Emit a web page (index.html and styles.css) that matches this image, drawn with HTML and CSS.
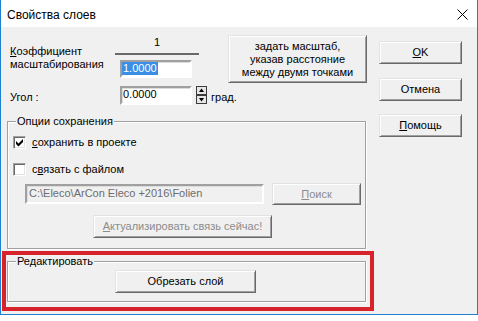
FILE: index.html
```html
<!DOCTYPE html>
<html>

<head>
  <meta charset="utf-8">
  <title>Свойства слоев</title>
  <meta name="viewport" content="width=device-width, initial-scale=1">

  <link rel="stylesheet" href="styles.css">

</head>

<body>
  <div class="window">
    <div class="titlebar">
      <span class="title">Свойства слоев</span>
      <svg class="close" width="11" height="11" viewBox="0 0 11 11">
        <path d="M0.5 0.5L10.5 10.5M10.5 0.5L0.5 10.5" stroke="#000" stroke-width="1" fill="none"/>
      </svg>
    </div>

    <div class="client">
      <div class="main">
        <div class="scale-row">
          <div class="scale-label"><u>К</u>оэффициент<br>масштабирования</div>
          <div class="ratio">
            <div class="ratio-num">1</div>
            <div class="ratio-bar"></div>
            <div class="field ratio-field"><span class="sel">1.0000</span></div>
          </div>
          <button class="btn btn-measure">задать масштаб,<br>указав расстояние<br>между двумя точками</button>
        </div>

        <div class="angle-row">
          <span class="angle-label">Угол :</span>
          <div class="field">0.0000</div>
          <svg class="spin" width="11" height="18" viewBox="0 0 11 18">
            <rect x="0.5" y="0.5" width="10" height="8" fill="#e6e6e6" stroke="#3c3c3c"/>
            <rect x="0.5" y="9.5" width="10" height="8" fill="#e6e6e6" stroke="#3c3c3c"/>
            <path d="M5.5 2.5L8 6H3z" fill="#000"/>
            <path d="M3 12H8L5.5 15.5z" fill="#000"/>
          </svg>
          <span class="unit">град.</span>
        </div>

        <fieldset class="group group-save">
          <legend>Опции сохранения</legend>
          <div class="check">
            <span class="box">
              <svg width="11" height="11" viewBox="0 0 11 11">
                <path d="M2 4L4.5 6.5L9 2V5L4.5 9.5L2 7z" fill="#000"/>
              </svg>
            </span>
            <span><u>с</u>охранить в проекте</span>
          </div>
          <div class="check check-link">
            <span class="box"></span>
            <span>с<u>в</u>язать с файлом</span>
          </div>
          <div class="path-row">
            <div class="field field-path">C:\Eleco\ArCon Eleco +2016\Folien</div>
            <button class="btn btn-browse" disabled><u>П</u>оиск</button>
          </div>
          <button class="btn btn-update" disabled><u>А</u>ктуализировать связь сейчас!</button>
        </fieldset>

        <div class="highlight">
          <fieldset class="group group-edit">
            <legend>Редактировать</legend>
            <button class="btn btn-cut">Обрезать слой</button>
          </fieldset>
        </div>
      </div>

      <div class="side">
        <button class="btn btn-side"><u>O</u>K</button>
        <button class="btn btn-side btn-cancel">Отмена</button>
        <button class="btn btn-side btn-help"><u>П</u>омощь</button>
      </div>
    </div>
  </div>
</body>

</html>
```

FILE: styles.css
```css
* {
  padding: 0px;
  margin: 0px;
  box-sizing: border-box;
}

body {
  background-color: #ffffff;
  font-family: "Liberation Sans", Arial, sans-serif;
  font-size: 11px;
  line-height: 13px;
  color: #000000;
}

u {
  text-decoration: underline;
  text-underline-offset: 1px;
}

.window {
  width: 478px;
  height: 315px;
  border: 1px solid #1f7fd0;
  border-top: none;
  background-color: #f0f0f0;
}

.titlebar {
  height: 27px;
  background-color: #ffffff;
  display: flex;
  justify-content: space-between;
  align-items: flex-start;
  padding: 8px 9px 0 6px;
}

.title {
  font-size: 12px;
  line-height: 14px;
}

.close {
  margin-top: 1px;
}

.client {
  display: flex;
}

.main {
  width: 373px;
}

/* scale factor block */
.scale-row {
  display: flex;
  align-items: flex-start;
  padding-left: 9px;
  height: 56px;
}

.scale-label {
  width: 105px;
  margin-top: 18px;
}

.ratio {
  width: 84px;
  padding-top: 9px;
}

.ratio-num {
  text-align: center;
}

.ratio-bar {
  height: 2px;
  margin-top: 4px;
  background-color: #696969;
}

.field {
  width: 72px;
  height: 19px;
  padding-left: 1px;
  background-color: #ffffff;
  border: 2px solid;
  border-color: #a0a0a0 #ffffff #ffffff #a0a0a0;
  box-shadow: inset 1px 1px 0 #dcdcdc;
  white-space: nowrap;
  overflow: hidden;
}

.ratio-field {
  height: 18px;
  margin: 5px 0 0 5px;
}

.sel {
  display: inline-block;
  margin-left: -1px;
  padding: 0 1px;
  background-color: #3a8ee6;
  color: #ffffff;
}

.angle-row {
  display: flex;
  align-items: flex-start;
  padding-left: 9px;
  margin-top: 3px;
}

.angle-label {
  width: 110px;
  margin-top: 5px;
}

.spin {
  margin-left: 4px;
  display: block;
}

.unit {
  margin: 5px 0 0 4px;
}

/* buttons */
.btn {
  display: block;
  font: inherit;
  color: #000000;
  background-color: #f0f0f0;
  border: 1px solid;
  border-color: #e3e3e3 #696969 #696969 #e3e3e3;
  box-shadow: inset 1px 1px 0 #ffffff, inset -1px -1px 0 #a0a0a0;
  text-align: center;
}

.btn:disabled {
  color: #8c8c8c;
}

.btn-measure {
  width: 139px;
  height: 48px;
  margin: 8px 0 0 29px;
}

/* group boxes */
.group {
  width: 359px;
  margin-left: 6px;
  padding: 8px 0 10px 5px;
  border: 1px solid #a0a0a0;
  box-shadow: 1px 1px 0 #ffffff, inset 1px 1px 0 #ffffff;
}

.group legend {
  margin-left: 3px;
  padding: 0 1px;
  background-color: #f0f0f0;
}

.group-save {
  margin-top: 10px;
}

.check {
  display: flex;
  align-items: center;
  height: 13px;
}

.check-link {
  margin-top: 14px;
}

.box {
  width: 13px;
  height: 13px;
  margin-right: 6px;
  background-color: #ffffff;
  border: 1px solid;
  border-color: #a0a0a0 #ffffff #ffffff #a0a0a0;
  box-shadow: inset 1px 1px 0 #696969, inset -1px -1px 0 #e3e3e3;
}

.box svg {
  display: block;
}

.path-row {
  display: flex;
  align-items: center;
  margin: 7px 0 0 12px;
  height: 22px;
}

.field-path {
  width: 239px;
  height: 20px;
  padding-left: 2px;
  background-color: #f0f0f0;
  color: #6d6d6d;
  line-height: 15px;
}

.btn-browse {
  width: 89px;
  height: 22px;
  margin-left: 8px;
}

.btn-update {
  width: 179px;
  height: 23px;
  margin: 10px 0 0 80px;
}

/* red marking around the edit group */
.highlight {
  width: 372px;
  margin: 2px 0 0 1px;
  padding: 0 3px 5px 1px;
  border: 4px solid #d8232a;
}

.group-edit {
  margin-left: 0;
  padding: 2px 0 8px 5px;
}

.btn-cut {
  width: 141px;
  height: 23px;
  margin-left: 102px;
}

/* right column */
.side {
  margin-left: 5px;
  padding-top: 14px;
}

.btn-side {
  width: 83px;
  height: 23px;
}

.btn-cancel {
  margin-top: 14px;
}

.btn-help {
  margin-top: 13px;
}
```
